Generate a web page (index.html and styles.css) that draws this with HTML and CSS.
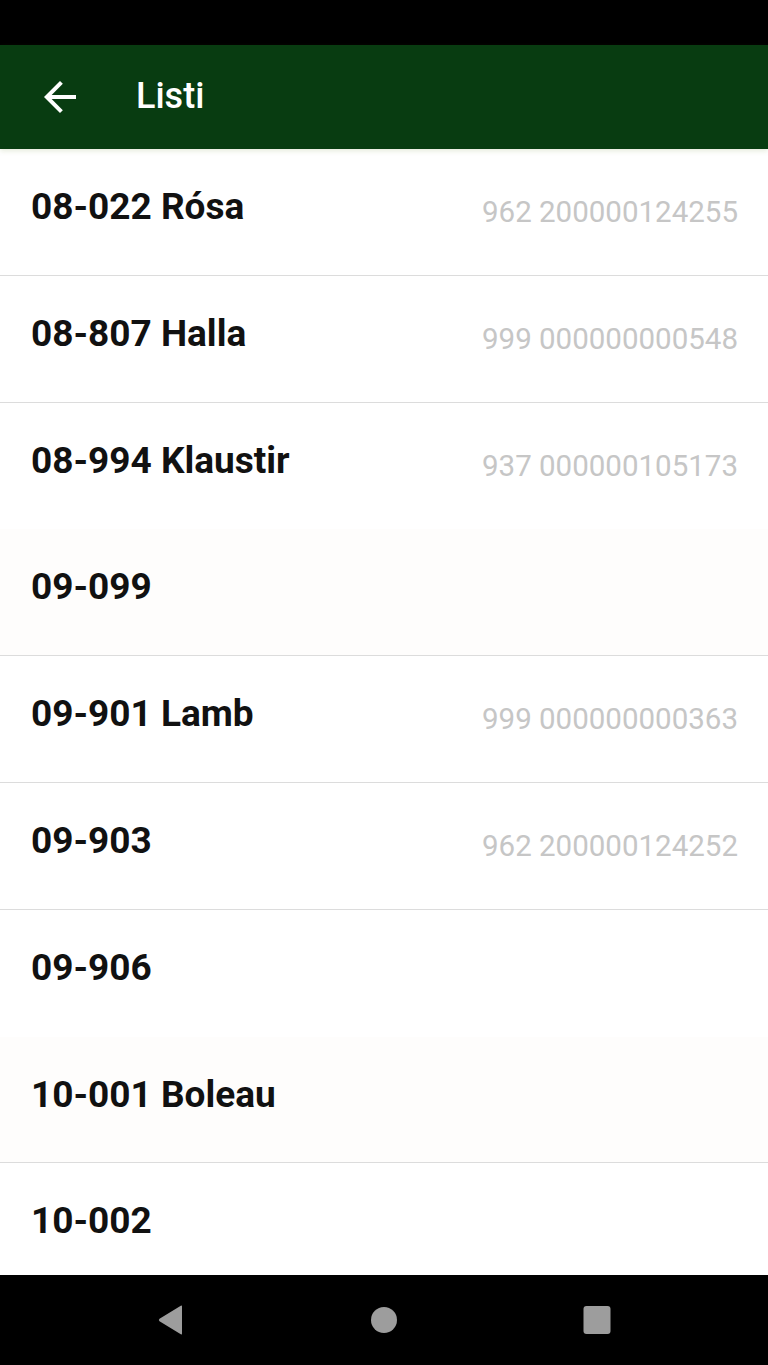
FILE: index.html
```html
<!DOCTYPE html>
<html lang="is">

<head>
    <meta charset="UTF-8">
    <meta name="viewport" content="width=device-width, initial-scale=1.0">
    <title>Listi</title>
    <link rel="stylesheet" href="styles.css">
</head>

<body>
    <div class="screen">
        <div class="statusbar"></div>

        <header class="appbar">
            <button type="button" class="back" aria-label="Til baka">
                <svg width="48" height="48" viewBox="0 0 24 24">
                    <path d="M20 11H7.83l5.59-5.59L12 4l-8 8 8 8 1.41-1.41L7.83 13H20v-2z" fill="#fff" />
                </svg>
            </button>
            <h1 class="title">Listi</h1>
        </header>

        <ul class="list">
            <li class="row">
                <span class="name">08-022 Rósa</span>
                <span class="code">962 200000124255</span>
            </li>
            <li class="row">
                <span class="name">08-807 Halla</span>
                <span class="code">999 000000000548</span>
            </li>
            <li class="row no-line">
                <span class="name">08-994 Klaustir</span>
                <span class="code">937 000000105173</span>
            </li>
            <li class="row shade">
                <span class="name">09-099</span>
            </li>
            <li class="row">
                <span class="name">09-901 Lamb</span>
                <span class="code">999 000000000363</span>
            </li>
            <li class="row">
                <span class="name">09-903</span>
                <span class="code">962 200000124252</span>
            </li>
            <li class="row no-line">
                <span class="name">09-906</span>
            </li>
            <li class="row shade">
                <span class="name">10-001 Boleau</span>
            </li>
            <li class="row">
                <span class="name">10-002</span>
            </li>
        </ul>

        <nav class="navbar">
            <svg width="32" height="32" viewBox="0 0 32 32">
                <path d="M27 2.5 L27 29.5 Q27 31 25.8 30.2 L4.5 17.2 Q3.2 16 4.5 14.8 L25.8 1.8 Q27 1 27 2.5 Z" fill="#9d9d9d" />
            </svg>
            <svg width="32" height="32" viewBox="0 0 32 32">
                <circle cx="16" cy="16" r="13" fill="#9d9d9d" />
            </svg>
            <svg width="32" height="32" viewBox="0 0 32 32">
                <rect x="2.5" y="2" width="27" height="28" rx="3" fill="#9d9d9d" />
            </svg>
        </nav>
    </div>
</body>

</html>
```

FILE: styles.css
```css
body {
    margin: 0;
    font-family: Roboto, "Noto Sans", Arial, sans-serif;
    background-color: #fff;
}

.screen {
    display: flex;
    flex-direction: column;
    width: 768px;
    height: 1365px;
    overflow: hidden;
}

.statusbar {
    height: 45px;
    flex-shrink: 0;
    background-color: #000;
}

.appbar {
    display: flex;
    align-items: center;
    height: 104px;
    flex-shrink: 0;
    padding-left: 36px;
    background-color: #083c11;
    box-shadow: 0 2px 5px rgba(90, 120, 20, 0.15);
    position: relative;
    z-index: 1;
}

.back {
    display: flex;
    padding: 0;
    border: none;
    background: none;
    cursor: pointer;
}

.title {
    margin: 0 0 2px 52px;
    font-size: 36px;
    font-weight: 500;
    color: #fff;
}

.list {
    flex: 1;
    margin: 0;
    padding: 0;
    list-style: none;
    overflow: hidden;
}

.row {
    display: flex;
    justify-content: space-between;
    align-items: flex-start;
    height: 126.8px;
    padding: 36px 30px 0 31px;
    box-sizing: border-box;
    border-bottom: 1px solid #dcdcdc;
}

.row.no-line {
    border-bottom-color: transparent;
}

.row.shade {
    background-color: #fefdfc;
}

.name {
    font-size: 37px;
    line-height: 44px;
    font-weight: 700;
    color: #111;
}

.code {
    margin-top: 9px;
    font-size: 29.5px;
    line-height: 36px;
    color: #c6c6c6;
}

.navbar {
    display: flex;
    justify-content: center;
    align-items: center;
    gap: 181px;
    height: 90px;
    flex-shrink: 0;
    background-color: #000;
}
```
